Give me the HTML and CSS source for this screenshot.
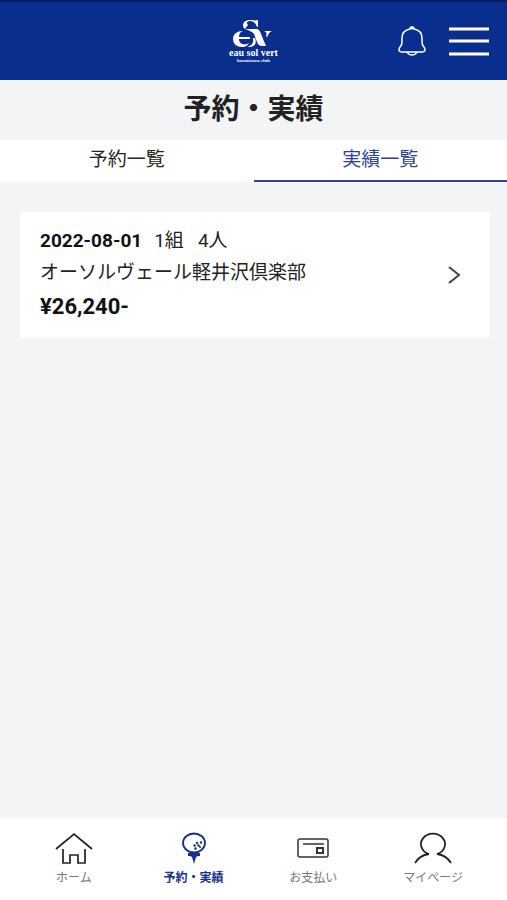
FILE: index.html
```html
<!DOCTYPE html>
<html lang="ja">

<head>
    <meta charset="utf-8">
    <meta name="viewport" content="width=device-width, initial-scale=1">
    <title>予約・実績</title>
    <link rel="stylesheet" href="styles.css">
</head>

<body>
    <header class="header">
        <a href="#" class="logo" aria-label="eau sol vert">
            <svg class="logo-mark" width="40" height="28" viewBox="0 0 40 28">
                <path d="M10 11C4 11 0 14 0 19s4 8 9 8c4 0 6-2 7-4-5 3-10 1-10-4h11v-2H6c0-3 1-5 4-6z" fill="#fff" />
                <path d="M25 0v7h-1c-1-4-4-6-7-6-3 0-4 2-2 4l-3 4C8 6 10 0 17 0c3 0 5 1 8 0z" fill="#fff" />
                <path d="M12 9h11c3 0 4 2 5 5l5 12h-4c-2 0-4-1-5-4l-3-8c-1-2-4-3-9-5z" fill="#fff" />
                <path d="M22 18c2 5 0 9-6 9h-2c5-1 7-4 6-9z" fill="#fff" />
                <path d="M31 11h8c-3 1-3 3-5 6l-1-1c1-2 1-4-2-5z" fill="#fff" />
            </svg>
            <span class="logo-name">eau sol vert</span>
            <span class="logo-sub">karuizawa club</span>
        </a>
        <div class="header-actions">
            <button type="button" class="icon-button" aria-label="お知らせ">
                <svg width="28" height="32" viewBox="0 0 28 32" fill="none" stroke="#fff" stroke-width="1.5">
                    <path d="M12 4a2 2 0 0 1 4 0c5 1 8 4 8 9 0 6 0 7 2 9 2 3 1 5-2 5H4c-3 0-4-2-2-5 2-2 2-3 2-9 0-5 3-8 8-9z" />
                    <path d="M9 27c1 2 3 3 5 3s4-1 5-3" />
                    <circle cx="14" cy="3" r="1.5" fill="#fff" stroke="none" />
                </svg>
            </button>
            <button type="button" class="icon-button" aria-label="メニュー">
                <svg width="40" height="30" viewBox="0 0 40 30" stroke="#fff" stroke-width="3">
                    <path d="M0 3h40M0 15h40M0 28h40" />
                </svg>
            </button>
        </div>
    </header>

    <h1 class="page-title">予約・実績</h1>

    <nav class="tabs">
        <a href="#" class="tab">予約一覧</a>
        <a href="#" class="tab active" aria-current="page">実績一覧</a>
    </nav>

    <main class="content">
        <a href="#" class="card">
            <div class="card-body">
                <p class="card-meta"><strong>2022-08-01</strong><span class="groups">1組</span><span>4人</span></p>
                <p class="card-name">オーソルヴェール軽井沢倶楽部</p>
                <p class="card-price">¥26,240-</p>
            </div>
            <svg width="14" height="20" viewBox="0 0 14 20" fill="none" stroke="#444" stroke-width="2">
                <path d="M2 2l10 8-10 8" />
            </svg>
        </a>
    </main>

    <nav class="bottom-nav">
        <a href="#" class="nav-item">
            <svg width="38" height="34" viewBox="0 0 38 34" fill="none" stroke="#222" stroke-width="1.7">
                <path d="M1 17L19 2l18 15M8 17v14h7v-8h8v8h7V17" />
            </svg>
            <span>ホーム</span>
        </a>
        <a href="#" class="nav-item active" aria-current="page">
            <svg width="38" height="34" viewBox="0 0 38 34">
                <ellipse cx="19" cy="11" rx="11" ry="9.5" fill="none" stroke="#172f8c" stroke-width="1.8" />
                <path d="M13 21h12v3h-2l-2 1-2 7-2-7-2-1h-2z" fill="#172f8c" />
                <g fill="#172f8c">
                    <circle cx="22" cy="11" r="1.2" />
                    <circle cx="26" cy="10.5" r="1.2" />
                    <circle cx="19.5" cy="13.5" r="1.2" />
                    <circle cx="23.5" cy="13.5" r="1.2" />
                    <circle cx="20.5" cy="16.5" r="1.2" />
                    <circle cx="25" cy="15" r="1" />
                </g>
            </svg>
            <span>予約・実績</span>
        </a>
        <a href="#" class="nav-item">
            <svg width="38" height="34" viewBox="0 0 38 34" fill="none" stroke="#333" stroke-width="1.5">
                <rect x="4" y="7" width="30" height="18" rx="2" />
                <path d="M9 12h21" />
                <rect x="23" y="16" width="6" height="5" stroke-width="2" />
            </svg>
            <span>お支払い</span>
        </a>
        <a href="#" class="nav-item">
            <svg width="38" height="34" viewBox="0 0 38 34" fill="none" stroke="#222" stroke-width="1.8">
                <path d="M1 31c3-5 7-8 14-9a12 10.5 0 1 1 8 0c7 1 11 4 14 9" />
            </svg>
            <span>マイページ</span>
        </a>
    </nav>
</body>

</html>
```
FILE: styles.css
```css
* {
    box-sizing: border-box;
}

body {
    font-family: Roboto, "Noto Sans CJK JP", sans-serif;
    background-color: #f2f4f6;
    color: #222;
    margin: 0;
    min-height: 100vh;
    display: flex;
    flex-direction: column;
}

a {
    color: inherit;
    text-decoration: none;
}

.header {
    display: grid;
    grid-template-columns: 1fr auto 1fr;
    align-items: center;
    height: 80px;
    padding: 0 18px;
    background-color: #0a2e8d;
    border-top: 2px solid #061b63;
}

.logo {
    grid-column: 2;
    display: flex;
    flex-direction: column;
    align-items: center;
    color: #fff;
    font-family: "Liberation Serif", serif;
    font-weight: bold;
}

.logo-name {
    font-size: 10px;
    line-height: 10px;
}

.logo-sub {
    font-size: 5px;
    line-height: 5px;
}

.header-actions {
    display: flex;
    justify-content: flex-end;
    align-items: center;
    gap: 23px;
}

.icon-button {
    display: flex;
    padding: 0;
    background: none;
    border: none;
    cursor: pointer;
}

.page-title {
    margin: 0;
    font-size: 28px;
    line-height: 60px;
    text-align: center;
}

.tabs {
    display: flex;
    background-color: #fff;
}

.tab {
    flex: 1;
    height: 42px;
    font-size: 19px;
    line-height: 40px;
    text-align: center;
    border-bottom: 2px solid transparent;
}

.tab.active {
    color: #2b429b;
    border-bottom-color: #2f4788;
}

.content {
    flex: 1;
    padding: 30px 18px 30px 20px;
}

.card {
    display: flex;
    align-items: center;
    justify-content: space-between;
    padding: 13px 28px 13px 20px;
    background-color: #fff;
}

.card p {
    margin: 0;
}

.card-meta {
    font-size: 19px;
    line-height: 32px;
}

.card-meta strong {
    color: #111;
}

.groups {
    margin: 0 14px 0 12px;
}

.card-name {
    font-size: 19px;
    line-height: 32px;
}

.card-price {
    font-size: 22px;
    font-weight: bold;
    line-height: 36px;
    color: #111;
}

.bottom-nav {
    display: flex;
    height: 82px;
    padding: 14px 14px 0;
    background-color: #fff;
}

.nav-item {
    flex: 1;
    display: flex;
    flex-direction: column;
    align-items: center;
    font-size: 12px;
    line-height: 24px;
    color: #777;
}

.nav-item.active {
    color: #172f8c;
    font-weight: bold;
}
```
